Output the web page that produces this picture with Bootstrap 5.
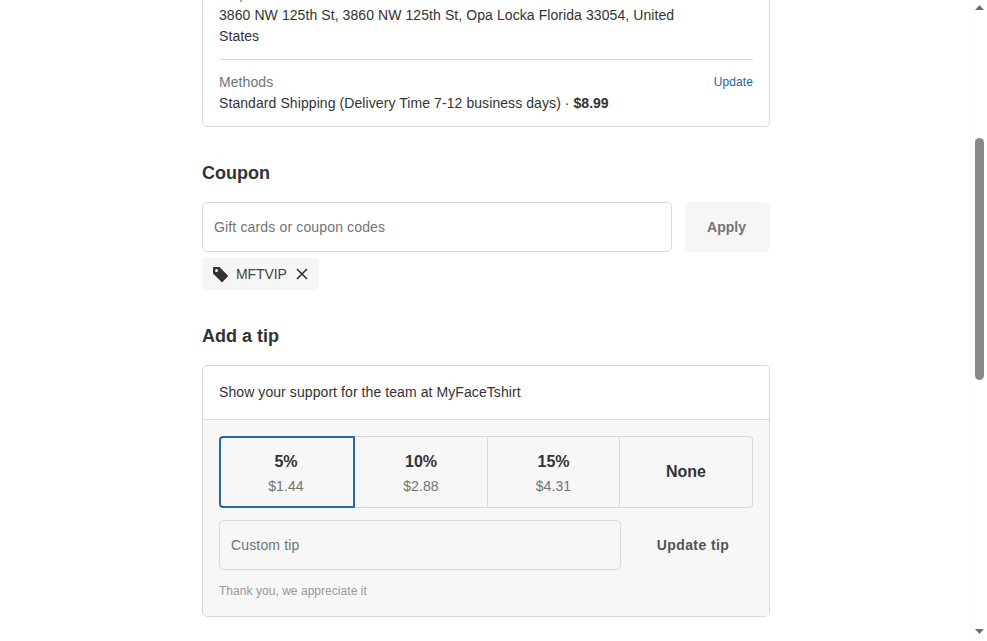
<!DOCTYPE html>
<html lang="en">
<head>
    <meta charset="UTF-8">
    <title>Checkout</title>
    <link href="https://cdn.jsdelivr.net/npm/bootstrap@5.3.3/dist/css/bootstrap.min.css" rel="stylesheet">
    <style>
        html, body { height: 100%; overflow: hidden; }
        body { font-family: "Liberation Sans", Arial, sans-serif; font-size: 14px; line-height: 21px; letter-spacing: .08px; color: #333; background: #fff; }
        b { letter-spacing: 0; }
        .checkout-col { width: 568px; margin: -17px 0 0 202px; }
        .info-box { border: 1px solid #d9d9d9; border-radius: 5px; }
        .ship-box { padding: 0 16px 12px; }
        .muted-label { color: #737373; }
        .update-link { color: #2a6496; font-size: 12px; text-decoration: none; }
        .address-line { margin: 12px 0; border-color: #d9d9d9; opacity: 1; }
        .section-title { font-size: 18px; line-height: 24px; font-weight: 700; letter-spacing: 0; color: #333; margin: 0; }
        .coupon-title { margin-top: 34px; }
        .coupon-row { margin-top: 17px; gap: 13px; }
        .coupon-input, .tip-input { height: 50px; border: 1px solid #d9d9d9; border-radius: 5px; padding: 0 11px; font-size: 14px; letter-spacing: .15px; color: #333; background: #fff; box-shadow: none; }
        .coupon-input::placeholder, .tip-input::placeholder { color: #737373; }
        .apply-btn { width: 85px; height: 50px; padding: 0 2px 0 0; background: #f6f6f6; border: 0; border-radius: 5px; color: #737373; font-size: 14px; font-weight: 700; letter-spacing: 0; }
        .code-tag { width: 117px; height: 32px; margin-top: 6px; background: #f6f6f6; border-radius: 4px; padding: 0 11px 0 10px; color: #444; letter-spacing: -.1px; }
        .tip-title { margin-top: 34px; }
        .tip-box { margin-top: 17px; }
        .tip-top { padding: 16px 16px 16px; border-bottom: 1px solid #d9d9d9; }
        .tip-body { background: #f7f7f7; padding: 16px; border-radius: 0 0 5px 5px; }
        .tip-grid { display: grid; grid-template-columns: 136px 133px 132px 133px; height: 72px; }
        .tip-tile { border: 1px solid #d9d9d9; border-left-width: 0; background: #f7f7f7; color: #333; padding: 2px 0 0; }
        .tip-tile b { display: block; font-size: 16px; line-height: 24px; }
        .tip-tile span { display: block; color: #737373; line-height: 21px; margin-top: 2px; letter-spacing: .1px; }
        .tip-tile.is-on { border: 2px solid #2a6a9a; border-radius: 4px 0 0 4px; padding-right: 2px; }
        .tip-tile.is-last { border-radius: 0 4px 4px 0; padding: 0; }
        .tip-row { margin-top: 12px; }
        .tip-input { width: 402px; background: #f7f7f7; }
        .tip-btn { width: 120px; background: none; border: 0; color: #545454; font-weight: 700; letter-spacing: .4px; padding: 0; }
        .thanks { font-size: 12px; line-height: 18px; letter-spacing: .04px; color: #999; margin: 12px 0 0; }
        .fake-scroll { position: absolute; top: 0; right: 0; width: 17px; height: 641px; background: #fff; border-left: 1px solid #f8f8f8; }
        .fake-thumb { position: absolute; top: 138px; left: 4px; width: 9px; height: 242px; background: #8a8a8a; border-radius: 5px; }
        .fake-arrow { position: absolute; left: 4px; width: 9px; height: 5px; fill: #6e6e6e; }
        .arrow-up { top: 5px; }
        .arrow-down { top: 629px; }
    </style>
</head>
<body>
<div class="checkout-col">
    <!-- shipping summary, top is scrolled off -->
    <div class="info-box ship-box">
        <div class="muted-label">Ship to</div>
        <div class="pe-5">3860 NW 125th St, 3860 NW 125th St, Opa Locka Florida 33054, United States</div>
        <hr class="address-line">
        <div class="d-flex justify-content-between align-items-center">
            <span class="muted-label">Methods</span>
            <a href="#" class="update-link">Update</a>
        </div>
        <div>Standard Shipping (Delivery Time 7-12 business days) · <b>$8.99</b></div>
    </div>

    <h2 class="section-title coupon-title">Coupon</h2>
    <div class="d-flex coupon-row">
        <input class="form-control coupon-input" placeholder="Gift cards or coupon codes">
        <button class="apply-btn flex-shrink-0" type="button">Apply</button>
    </div>
    <div class="code-tag d-flex align-items-center gap-2">
        <svg width="16" height="16" viewBox="0 0 16 16" fill="#333"><path fill-rule="evenodd" d="M1 1h6.500l7.900 8a1.400 1.400 0 0 1 0 2l-4.400 4.400a1.400 1.400 0 0 1-2 0L1 7.500zM4.500 3a1.500 1.500 0 1 0 0 3 1.500 1.500 0 0 0 0-3z"/></svg>
        <span class="flex-grow-1">MFTVIP</span>
        <svg width="12" height="12" viewBox="0 0 12 12" stroke="#333" stroke-width="1.6"><path d="M1 1l10 10M11 1L1 11"/></svg>
    </div>

    <h2 class="section-title tip-title">Add a tip</h2>
    <div class="info-box tip-box">
        <div class="tip-top">Show your support for the team at MyFaceTshirt</div>
        <div class="tip-body">
            <div class="tip-grid">
                <button class="tip-tile is-on" type="button"><b>5%</b><span>$1.44</span></button>
                <button class="tip-tile" type="button"><b>10%</b><span>$2.88</span></button>
                <button class="tip-tile" type="button"><b>15%</b><span>$4.31</span></button>
                <button class="tip-tile is-last" type="button"><b>None</b></button>
            </div>
            <div class="d-flex justify-content-between tip-row">
                <input class="form-control tip-input" placeholder="Custom tip">
                <button class="tip-btn" type="button">Update tip</button>
            </div>
            <p class="thanks">Thank you, we appreciate it</p>
        </div>
    </div>
</div>

<div class="fake-scroll">
    <svg class="fake-arrow arrow-up" viewBox="0 0 9 5"><path d="M4.500 0L9 5H0z"/></svg>
    <div class="fake-thumb"></div>
    <svg class="fake-arrow arrow-down" viewBox="0 0 9 5"><path d="M0 0h9L4.500 5z"/></svg>
</div>

<script src="https://cdn.jsdelivr.net/npm/bootstrap@5.3.3/dist/js/bootstrap.bundle.min.js"></script>
</body>
</html>
